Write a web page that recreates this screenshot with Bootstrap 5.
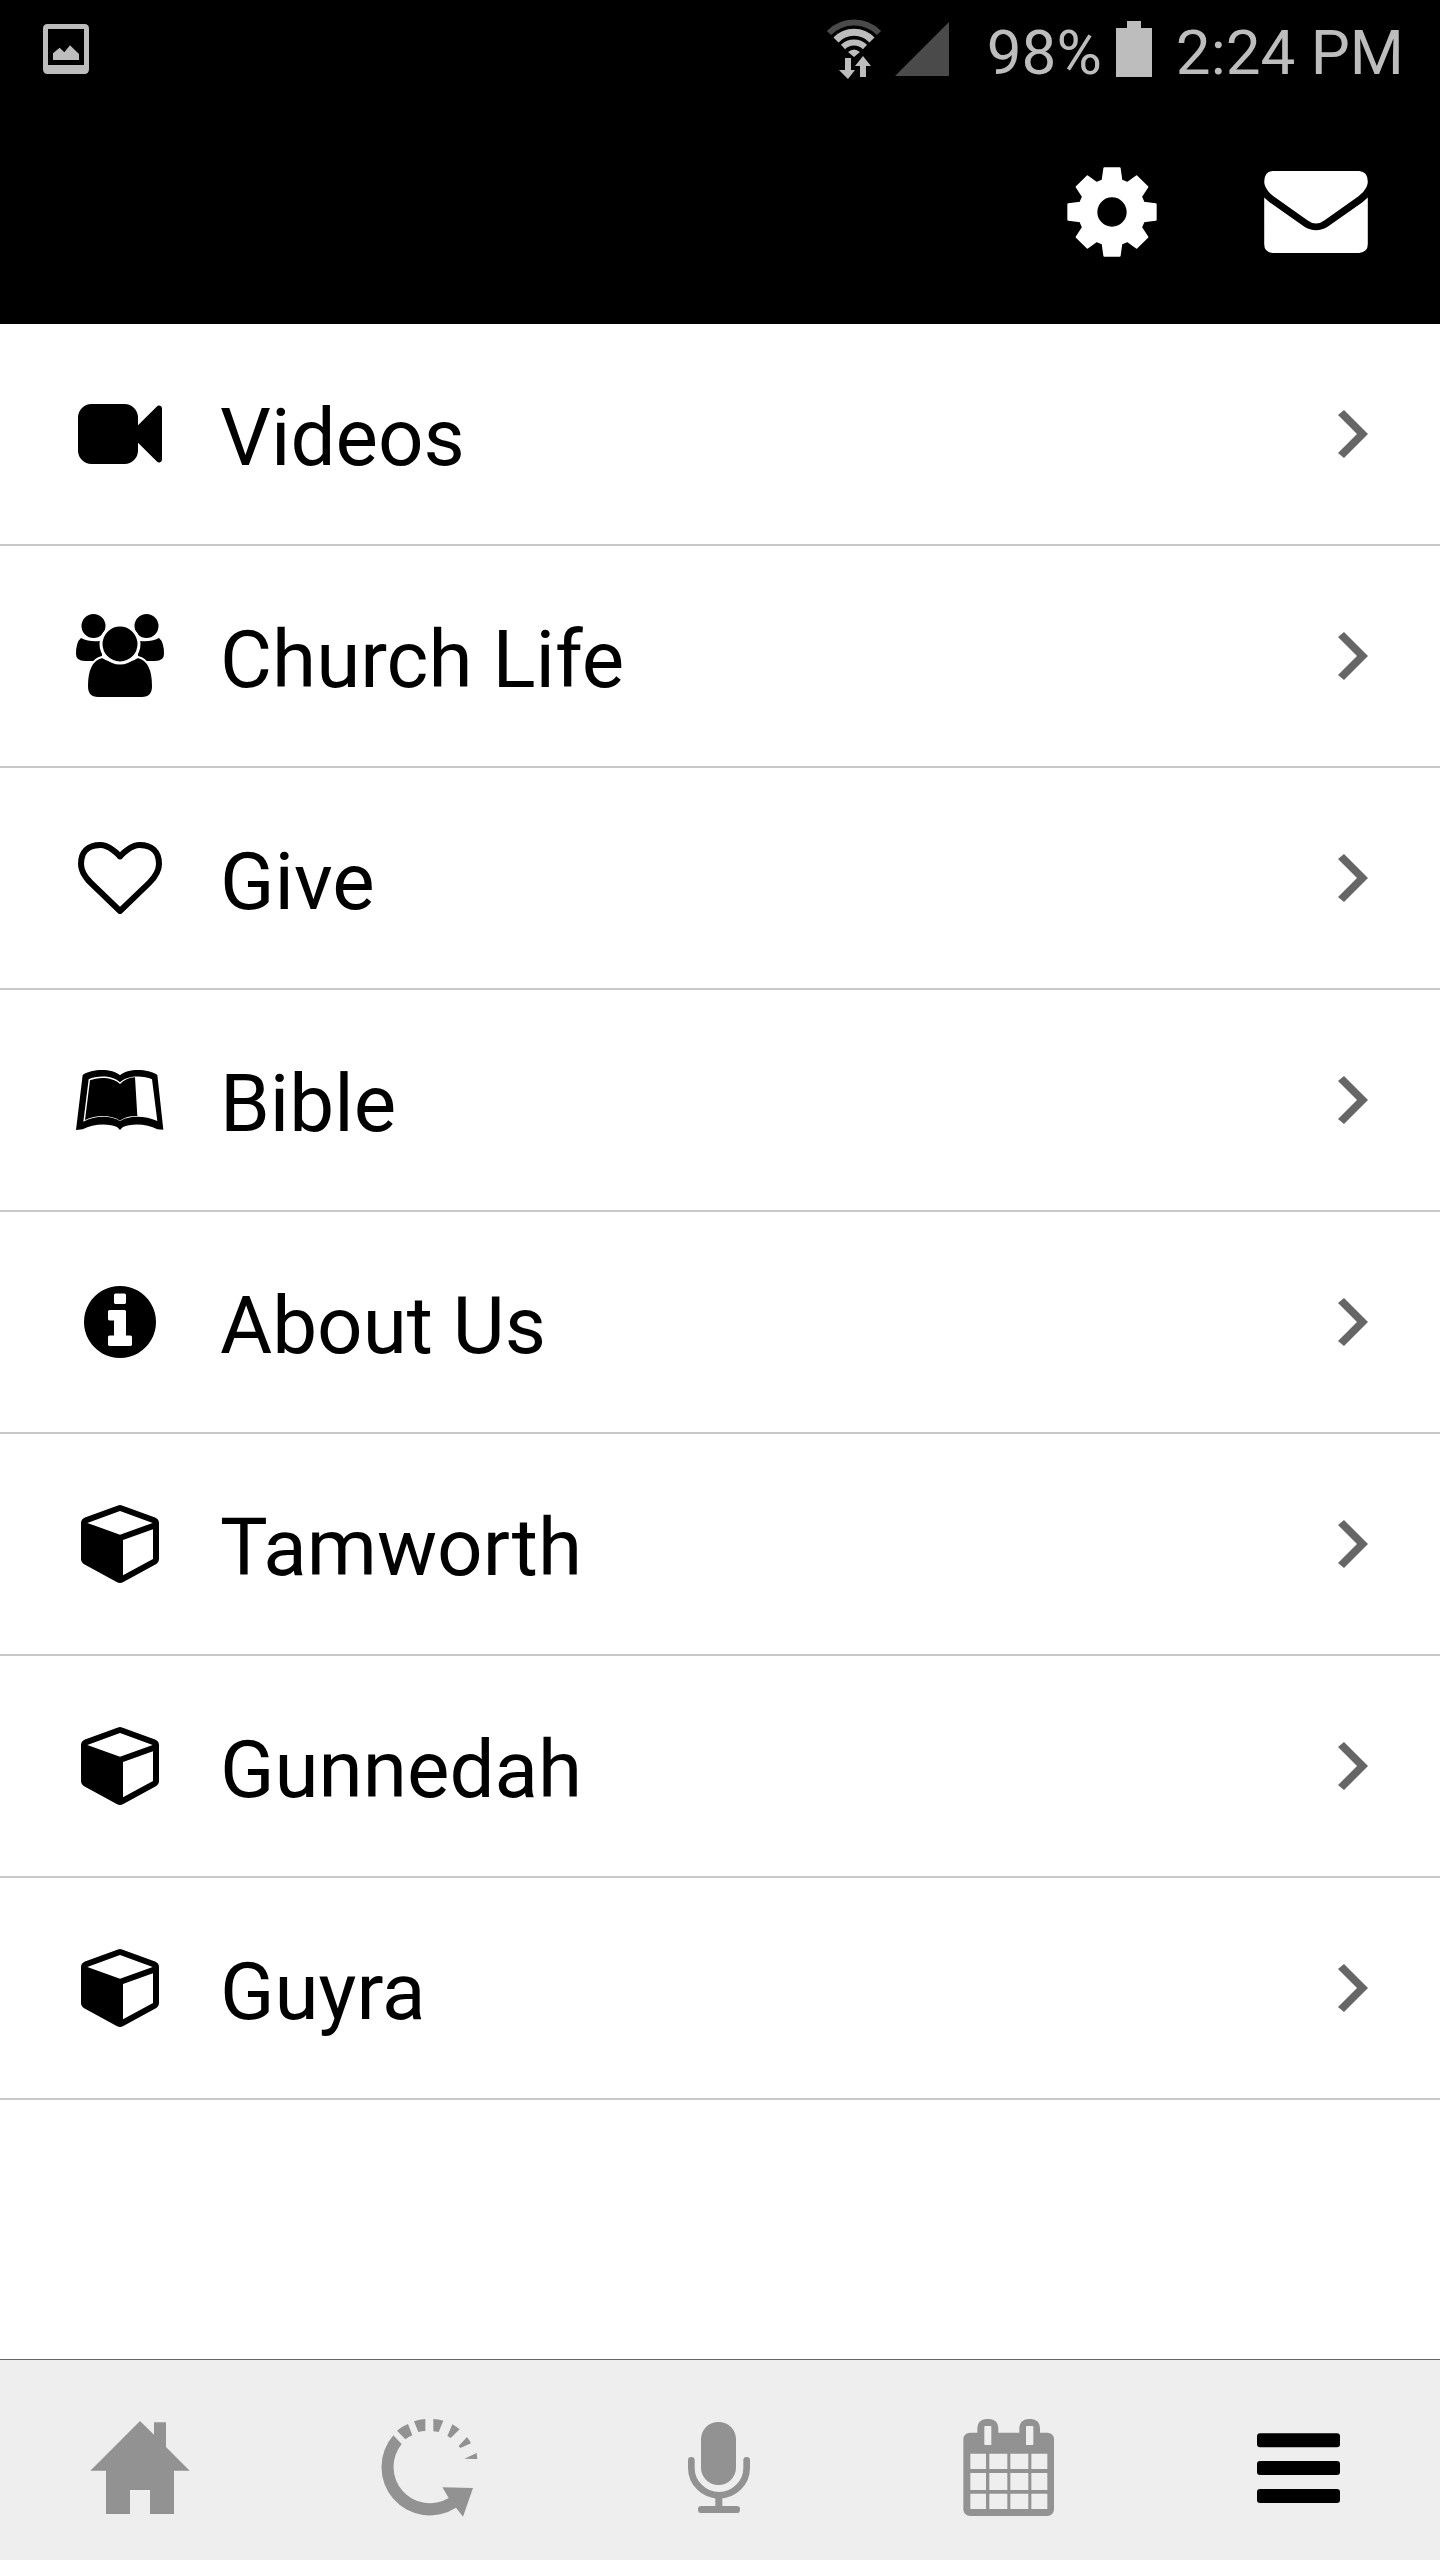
<!DOCTYPE html>
<html lang="en">
<head>
<meta charset="utf-8">
<meta name="viewport" content="width=device-width, initial-scale=1">
<title>Church app menu</title>
<link rel="stylesheet" href="https://cdn.jsdelivr.net/npm/bootstrap@5.3.0/dist/css/bootstrap.min.css">
<style>
  body { font-family: Roboto, "Liberation Sans", sans-serif; background: #fff; color: #000; }
  svg { display: block; flex: none; }
  .status-bar { height: 98px; padding: 0 36px 0 43px; color: #bdbdbd; font-size: 62px; line-height: 80px; }
  .status-text { padding-top: 8px; }
  .status-net { gap: 13px; margin-right: 38px; }
  .status-power { gap: 14px; margin-right: 24px; }
  .top-nav { height: 226px; padding: 2px 72px 0; gap: 107px; }
  .menu-row { display: flex; align-items: center; gap: 52px; height: 222px; padding: 0 72px; border: 0; border-bottom: 2px solid #c8c8c8; color: #000; background: #fff; font-size: 80px; line-height: 96px; }
  .menu-label { padding-top: 8px; }
  .tab-bar { background: #eee; border-top: 1px solid #666; padding: 57px 72px 43px 70px; margin-top: auto; }
  .tab-link { display: flex; justify-content: center; width: 140px; color: #929292; }
  .tab-link.active { color: #000; }
</style>
<script src="https://cdn.jsdelivr.net/npm/bootstrap@5.3.0/dist/js/bootstrap.bundle.min.js"></script>
</head>
<body class="d-flex flex-column min-vh-100">

<svg width="0" height="0" class="d-none" aria-hidden="true">
  <symbol id="cube" viewBox="-128 -128 2048 2048"><path transform="translate(64 -64)" fill-rule="evenodd" d="M896 1629l640-349v-636l-640 233v752zm-64-865l698-254-698-254-698 254zm832-252v768q0 35-18 65t-49 47l-704 384q-28 16-61 16t-61-16l-704-384q-31-17-49-47t-18-65v-768q0-40 23-73t61-47l704-256q22-8 44-8t44 8l704 256q38 14 61 47t23 73z"/></symbol>
  <symbol id="chevron" viewBox="0 0 30 48"><path fill="#666" d="M6 0l24 24L6 48l-6-5 19-19L0 5z"/></symbol>
</svg>

<header class="bg-black">
  <div class="status-bar d-flex align-items-center">
    <svg width="46" height="50" viewBox="0 0 138 150" fill="currentColor" aria-hidden="true"><path fill-rule="evenodd" d="M14 0h110q14 0 14 14v122q0 14-14 14H14q-14 0-14-14V14Q0 0 14 0zM15 15v108h108V15zM30 108V88l20-17 14 14 17-21 27 26v18z"/></svg>
    <div class="status-net d-flex align-items-center ms-auto">
      <svg width="56" height="60" viewBox="0 0 56 60" fill="none" stroke="currentColor" aria-hidden="true">
        <path stroke="#4a4a4a" stroke-width="6" d="M3 14a35 35 0 0 1 50 0"/>
        <path stroke-width="7" d="M10 21a25 25 0 0 1 36 0"/>
        <path stroke-width="6" d="M17 28a16 16 0 0 1 22 0"/>
        <path fill="currentColor" stroke="none" d="M22 33q6-5 12 0l-6 5zM19 39h6v12h4l-7 9-9-9h6zM37 37l8 10h-5v11h-6V47h-5z"/>
      </svg>
      <svg width="54" height="54" viewBox="0 0 54 54" aria-hidden="true"><path fill="#4a4a4a" d="M54 0v54H0z"/></svg>
    </div>
    <div class="status-power d-flex align-items-center">
      <span class="status-text">98%</span>
      <svg width="36" height="56" viewBox="0 0 36 56" fill="currentColor" aria-hidden="true"><path d="M11 0h14v7h11v49H0V7h11z"/></svg>
    </div>
    <span class="status-text">2:24 PM</span>
  </div>
  <nav class="top-nav d-flex align-items-center justify-content-end" aria-label="Tools">
    <button type="button" class="btn p-0 border-0 text-white" aria-label="Settings">
      <svg width="90" height="90" viewBox="-135 -135 270 270" fill="currentColor"><path fill-rule="evenodd" stroke="currentColor" stroke-width="6" stroke-linejoin="round" d="M-23-131H23L28-95 46-87 74-107 106-75 87-46 95-28 131-23V23L95 28 87 46 106 75 74 107 46 87 28 95 23 131H-23L-28 95-46 87-74 107-106 75-87 46-95 28-131 23V-23L-95-28-87-46-106-75-74-107-46-87-28-95zM0-47a47 47 0 1 0 0 94a47 47 0 1 0 0-94z"/></svg>
    </button>
    <button type="button" class="btn p-0 border-0 text-white" aria-label="Messages">
      <svg width="104" height="82" viewBox="0 0 312 247" fill="currentColor"><path d="M26 0H286Q312 2 312 32C312 48 300 64 284 76L182 148Q156 168 130 148L28 76C12 64 0 48 0 32Q0 2 26 0zM0 80Q6 86 16 94L120 167Q156 190 192 167L296 94 312 80V221Q312 245 286 247H26Q0 245 0 221z"/></svg>
    </button>
  </nav>
</header>

<main>
  <div class="list-group rounded-0">
    <a href="#videos" class="list-group-item-action menu-row text-decoration-none">
      <svg width="96" height="96" viewBox="-128 -128 2048 2048" aria-hidden="true"><path d="M1792 352v1088q0 42-39 59-13 5-25 5-27 0-45-19l-403-403v166q0 119-84.5 203.5t-203.5 84.5h-704q-119 0-203.5-84.5t-84.5-203.5v-704q0-119 84.5-203.5t203.5-84.5h704q119 0 203.5 84.5t84.5 203.5v165l403-402q18-19 45-19 12 0 25 5 39 17 39 59z"/></svg>
      <span class="menu-label">Videos</span>
      <svg class="ms-auto" width="30" height="48" aria-hidden="true"><use href="#chevron"/></svg>
    </a>
    <a href="#church-life" class="list-group-item-action menu-row text-decoration-none">
      <svg width="96" height="96" viewBox="0 0 96 96" aria-hidden="true">
        <path d="M9 30C16 34 27 34 30 32V53H13Q4 53 4 46Q4 34 9 30zM87 30C80 34 69 34 66 32V53H83Q92 53 92 46Q92 34 87 30z"/>
        <g stroke="#fff" stroke-width="2"><circle cx="21.500" cy="18" r="13"/><circle cx="74.500" cy="18" r="13"/></g>
        <path stroke="#fff" stroke-width="2" d="M30 49Q48 60 66 49C78 52 81 66 81 78Q81 90 70 90H26Q15 90 15 78C15 66 18 52 30 49z"/>
        <circle cx="48" cy="36" r="19" stroke="#fff" stroke-width="3"/>
      </svg>
      <span class="menu-label">Church Life</span>
      <svg class="ms-auto" width="30" height="48" aria-hidden="true"><use href="#chevron"/></svg>
    </a>
    <a href="#give" class="list-group-item-action menu-row text-decoration-none">
      <svg width="96" height="96" viewBox="-128 -128 2048 2048" aria-hidden="true"><path d="M1664 596q0-81-21.500-143t-55-98.500-81.500-59.500-94-31-98-8-112 25.500-110.500 64-86.500 72-60 61.500q-18 22-49 22t-49-22q-24-28-60-61.500t-86.500-72-110.500-64-112-25.500-98 8-94 31-81.500 59.500-55 98.500-21.500 143q0 168 187 355l581 560 580-559q188-188 188-356zm128 0q0 221-229 450l-623 600q-18 18-44 18t-44-18l-624-602q-10-8-27.500-26t-55.500-65.500-68-97.500-53.500-121-23.500-138q0-220 127-344t351-124q62 0 126.500 21.500t120 58 95.500 68.500 76 68q36-36 76-68t95.500-68.500 120-58 126.500-21.500q224 0 351 124t127 344z"/></svg>
      <span class="menu-label">Give</span>
      <svg class="ms-auto" width="30" height="48" aria-hidden="true"><use href="#chevron"/></svg>
    </a>
    <a href="#bible" class="list-group-item-action menu-row text-decoration-none">
      <svg width="96" height="96" viewBox="0 0 288 288" aria-hidden="true">
        <path d="M32 69C60 50 120 48 144 70C168 48 228 50 256 69L274 233 256 232C225 214 175 214 152 226L144 234 136 226C113 214 63 214 32 232L12 234z"/>
        <path fill="#fff" d="M50 82C76 69 124 70 144 91C164 70 212 69 240 82L256 207C220 190 168 189 144 208C120 189 68 190 34 209z"/>
        <path d="M54 85C78 74 122 74 144 96C156 84 170 77 189 76L196 192C174 192 158 196 144 206C118 188 72 188 39 204z"/>
      </svg>
      <span class="menu-label">Bible</span>
      <svg class="ms-auto" width="30" height="48" aria-hidden="true"><use href="#chevron"/></svg>
    </a>
    <a href="#about" class="list-group-item-action menu-row text-decoration-none">
      <svg width="96" height="96" viewBox="-128 -128 2048 2048" aria-hidden="true"><path d="M1152 1376v-160q0-14-9-23t-23-9h-96v-512q0-14-9-23t-23-9h-320q-14 0-23 9t-9 23v160q0 14 9 23t23 9h96v320h-96q-14 0-23 9t-9 23v160q0 14 9 23t23 9h448q14 0 23-9t9-23zm-128-896v-160q0-14-9-23t-23-9h-192q-14 0-23 9t-9 23v160q0 14 9 23t23 9h192q14 0 23-9t9-23zm640 416q0 209-103 385.500t-279.500 279.500-385.500 103-385.500-103-279.500-279.500-103-385.500 103-385.500 279.500-279.500 385.500-103 385.500 103 279.500 279.500 103 385.500z"/></svg>
      <span class="menu-label">About Us</span>
      <svg class="ms-auto" width="30" height="48" aria-hidden="true"><use href="#chevron"/></svg>
    </a>
    <a href="#tamworth" class="list-group-item-action menu-row text-decoration-none">
      <svg width="96" height="96" aria-hidden="true"><use href="#cube"/></svg>
      <span class="menu-label">Tamworth</span>
      <svg class="ms-auto" width="30" height="48" aria-hidden="true"><use href="#chevron"/></svg>
    </a>
    <a href="#gunnedah" class="list-group-item-action menu-row text-decoration-none">
      <svg width="96" height="96" aria-hidden="true"><use href="#cube"/></svg>
      <span class="menu-label">Gunnedah</span>
      <svg class="ms-auto" width="30" height="48" aria-hidden="true"><use href="#chevron"/></svg>
    </a>
    <a href="#guyra" class="list-group-item-action menu-row text-decoration-none">
      <svg width="96" height="96" aria-hidden="true"><use href="#cube"/></svg>
      <span class="menu-label">Guyra</span>
      <svg class="ms-auto" width="30" height="48" aria-hidden="true"><use href="#chevron"/></svg>
    </a>
  </div>
</main>

<footer class="tab-bar">
  <nav class="d-flex justify-content-between" aria-label="Main">
    <a href="#home" class="tab-link" aria-label="Home">
      <svg width="100" height="100" viewBox="0 0 300 300" fill="currentColor"><path d="M150 12L192 53V16H228V90L299 161H252V291H180V219H120V291H48V161H1z"/></svg>
    </a>
    <a href="#replay" class="tab-link" aria-label="Replay">
      <svg width="100" height="100" viewBox="0 0 300 300" fill="currentColor"><path d="M40 55L65 81A109 109 0 0 0 206 243L187 211 279 213 249 299 228 272A145 145 0 0 1 40 55zM51 41Q66 28 84 21L97 55Q86 60 76 67zM102 13Q118 7 136 6V42Q125 42 115 45zM160 6Q175 7 190 11L176 45Q168 43 160 43zM217 22Q229 29 239 37L212 63 202 57zM261 60Q268 69 273 79L241 93 236 87zM290 108L292 126 253 125z"/></svg>
    </a>
    <a href="#sermons" class="tab-link" aria-label="Sermons">
      <svg width="100" height="100" viewBox="0 0 300 300" fill="currentColor"><rect x="96" y="15" width="105" height="189" rx="52"/><path fill="none" stroke="currentColor" stroke-width="20" stroke-linecap="round" d="M67 130V152a83 83 0 0 0 166 0V130"/><path d="M139 238h21v32h-21z"/><rect x="87" y="267" width="126" height="21" rx="10"/></svg>
    </a>
    <a href="#events" class="tab-link" aria-label="Events">
      <svg width="100" height="100" viewBox="0 0 300 300" fill="currentColor"><rect x="13" y="47" width="272" height="250" rx="20"/><rect x="55" y="6" width="63" height="80" rx="26"/><rect x="181" y="6" width="62" height="80" rx="26"/><g fill="#eee"><rect x="76" y="27" width="21" height="57" rx="2"/><rect x="201" y="27" width="22" height="57" rx="2"/><path d="M34 110h47v46H34zM91 110h54v46H91zM154 110h54v46h-54zM217 110h48v46h-48zM34 168h47v51H34zM91 168h54v51H91zM154 168h54v51h-54zM217 168h48v51h-48zM34 230h47v46H34zM91 230h54v46H91zM154 230h54v46h-54zM217 230h48v46h-48z"/></g></svg>
    </a>
    <a href="#menu" class="tab-link active" aria-label="Menu" aria-current="page">
      <svg width="100" height="100" viewBox="0 0 300 300" fill="currentColor"><rect x="27" y="49" width="249" height="42" rx="9"/><rect x="27" y="132" width="249" height="42" rx="9"/><rect x="27" y="216" width="249" height="42" rx="9"/></svg>
    </a>
  </nav>
</footer>
</body>
</html>
